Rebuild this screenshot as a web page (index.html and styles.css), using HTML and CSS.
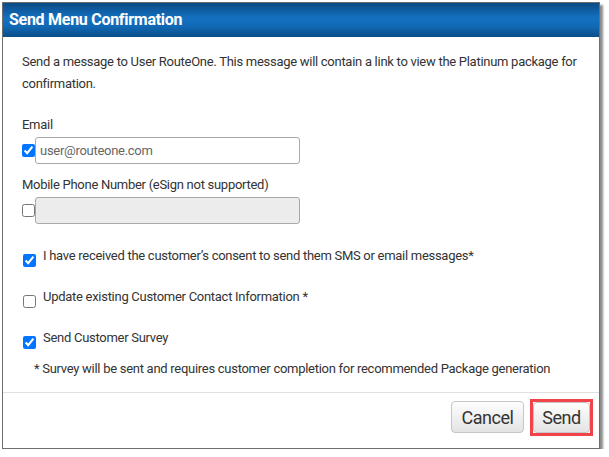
FILE: index.html
```html
<!DOCTYPE html>
<html lang="en">

<head>
    <meta charset="UTF-8">
    <title>Send Menu Confirmation</title>
    <link rel="stylesheet" href="styles.css">
</head>

<body>
    <div class="dialog">
        <div class="dialog-title">Send Menu Confirmation</div>
        <div class="dialog-body">
            <p class="intro">Send a message to User RouteOne. This message will contain a link to view the Platinum package for confirmation.</p>

            <label class="field-label" for="email">Email</label>
            <div class="field-row">
                <input type="checkbox" checked>
                <input type="text" id="email" class="text-input" value="user@routeone.com">
            </div>

            <label class="field-label mobile" for="mobile">Mobile Phone Number (eSign not supported)</label>
            <div class="field-row">
                <input type="checkbox">
                <input type="text" id="mobile" class="text-input" disabled>
            </div>

            <div class="check-row first">
                <input type="checkbox" checked>
                <span>I have received the customer’s consent to send them SMS or email messages*</span>
            </div>
            <div class="check-row">
                <input type="checkbox">
                <span>Update existing Customer Contact Information *</span>
            </div>
            <div class="check-row">
                <input type="checkbox" checked>
                <span>Send Customer Survey</span>
            </div>
            <p class="note">* Survey will be sent and requires customer completion for recommended Package generation</p>
        </div>
        <div class="dialog-footer">
            <button class="btn btn-cancel">Cancel</button>
            <span class="highlight"><button class="btn btn-send">Send</button></span>
        </div>
    </div>
</body>

</html>
```

FILE: styles.css
```css
body {
    margin: 0;
    background-color: #fff;
    font-family: Roboto, "Liberation Sans", sans-serif;
    font-size: 13px;
    letter-spacing: -0.28px;
    color: #333;
}

.dialog {
    margin: 2px 0 0 2px;
    width: 596px;
    height: 445px;
    border: 1px solid #6e6e6e;
    box-shadow: 3px 3px 2px rgba(0, 0, 0, 0.45);
    display: flex;
    flex-direction: column;
    background: #fff;
}

.dialog-title {
    height: 34px;
    line-height: 34px;
    padding-left: 6px;
    color: #fff;
    font-size: 16px;
    font-weight: bold;
    background: linear-gradient(#0a4a84, #1472c2 45%, #1168b3 70%, #0a4e88);
}

.dialog-body {
    flex: 1;
    padding: 14px 10px 0 19px;
}

.intro {
    margin: 0;
    line-height: 22px;
}

.field-label {
    display: block;
    margin-top: 20px;
    line-height: 20px;
}

.field-label.mobile {
    margin-top: 11px;
}

.field-row {
    display: flex;
    align-items: center;
    margin-top: 2px;
}

.field-row input[type="checkbox"] {
    margin: 0;
}

.text-input {
    width: 265px;
    height: 27px;
    box-sizing: border-box;
    border: 1px solid #a9a9a9;
    border-radius: 3px;
    padding: 0 4px;
    font-family: inherit;
    font-size: 13px;
    letter-spacing: inherit;
    color: #666;
    background: #fff;
}

.text-input:disabled {
    background: #ececec;
}

.check-row {
    display: flex;
    align-items: flex-start;
    gap: 7px;
    margin-top: 20px;
    line-height: 20px;
}

.check-row.first {
    margin-top: 22px;
}

.check-row input {
    margin: 8px 0 0 1px;
}

.note {
    margin: 10px 0 0 12px;
    line-height: 20px;
}

.dialog-footer {
    height: 56px;
    box-sizing: border-box;
    border-top: 1px solid #e0e0e0;
    display: flex;
    justify-content: flex-end;
    align-items: flex-start;
    gap: 6px;
    padding: 6px 6px 0 0;
}

.btn {
    height: 32px;
    border: 1px solid #c6c6c6;
    border-radius: 4px;
    background: linear-gradient(#fdfdfd, #e4e4e4);
    font-family: inherit;
    font-size: 18px;
    letter-spacing: -0.5px;
    color: #333;
}

.btn-cancel {
    width: 73px;
    margin-top: 2px;
}

.highlight {
    display: block;
    border: 3px solid #f2424a;
}

.btn-send {
    display: block;
    width: 57px;
    height: 31px;
}
```
